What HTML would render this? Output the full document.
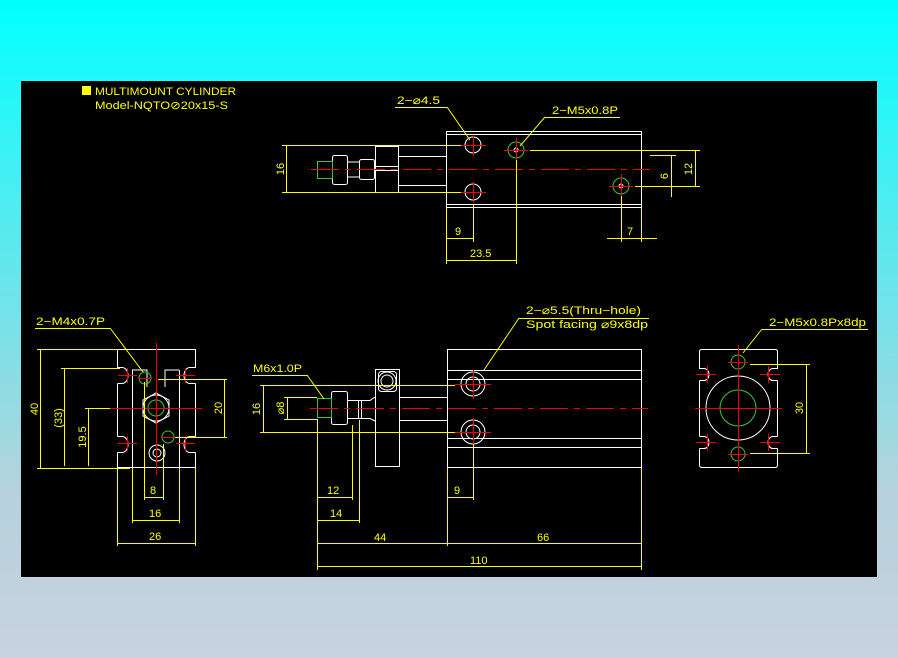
<!DOCTYPE html>
<html><head><meta charset="utf-8"><style>
html,body{margin:0;padding:0;width:898px;height:658px;overflow:hidden;background:linear-gradient(#00ffff 0%,#20f8fa 12%,#b6d2dc 75%,#c8d2e0 100%)}
svg{position:absolute;left:0;top:0}
text{font-family:"Liberation Sans",sans-serif;font-size:11px;fill:#ffff00}
</style></head><body>
<svg width="898" height="658" viewBox="0 0 898 658">
<rect x="21" y="81" width="856" height="496" fill="#000"/>
<rect x="82" y="86" width="9" height="9" fill="#ffff00"/>
<text x="95" y="95" textLength="141" lengthAdjust="spacingAndGlyphs">MULTIMOUNT  CYLINDER</text>
<text x="95" y="109" textLength="133" lengthAdjust="spacingAndGlyphs">Model-NQTO⊘20x15-S</text>

<!-- TOP VIEW -->
<g fill="none" stroke="#fff" stroke-width="1">
<rect x="446.5" y="131.5" width="195" height="76"/>
<line x1="446" y1="134.5" x2="641" y2="134.5"/><line x1="446" y1="204.5" x2="641" y2="204.5"/>
<rect x="375.5" y="146.5" width="23" height="46"/>
<line x1="399" y1="156.5" x2="446" y2="156.5"/><line x1="399" y1="185.5" x2="446" y2="185.5"/>
<line x1="375" y1="166.5" x2="399" y2="166.5"/><line x1="375" y1="170.5" x2="399" y2="170.5"/>
<rect x="332.5" y="155.5" width="15" height="29" rx="2"/>
<rect x="359.5" y="159.5" width="15" height="20" rx="2"/>
<line x1="347" y1="162" x2="360" y2="162"/><line x1="347" y1="177" x2="360" y2="177"/>
<circle cx="473" cy="145" r="8"/><circle cx="473" cy="192" r="8"/>
<circle cx="516" cy="150" r="2"/><circle cx="621" cy="186" r="2"/>
</g>
<g fill="none" stroke="#3c3" stroke-width="1">
<rect x="317.5" y="161.5" width="15" height="17"/>
<circle cx="516" cy="150" r="8"/><circle cx="621" cy="186" r="8"/>
</g>
<g stroke="#e00" stroke-width="1">
<line x1="311" y1="169.5" x2="650" y2="169.5" stroke-dasharray="28,6,6,6"/>
<line x1="461" y1="145.5" x2="486" y2="145.5"/><line x1="473.5" y1="135" x2="473.5" y2="156"/>
<line x1="461" y1="192.5" x2="486" y2="192.5"/><line x1="473.5" y1="182" x2="473.5" y2="203"/>
<line x1="504" y1="150.5" x2="528" y2="150.5"/><line x1="516.5" y1="138" x2="516.5" y2="162"/>
<line x1="609" y1="186.5" x2="633" y2="186.5"/><line x1="621.5" y1="174" x2="621.5" y2="198"/>
</g>
<g stroke="#ff0" stroke-width="1" fill="none">
<line x1="282" y1="145.5" x2="461" y2="145.5"/><line x1="282" y1="192.5" x2="461" y2="192.5"/>
<line x1="286.5" y1="146" x2="286.5" y2="192"/>
<line x1="446.5" y1="208" x2="446.5" y2="264"/><line x1="473.5" y1="204" x2="473.5" y2="242"/>
<line x1="446" y1="238.5" x2="473" y2="238.5"/>
<line x1="516.5" y1="160" x2="516.5" y2="264"/><line x1="446" y1="260.5" x2="516" y2="260.5"/>
<line x1="621.5" y1="196" x2="621.5" y2="242"/><line x1="641.5" y1="208" x2="641.5" y2="242"/>
<line x1="607" y1="238.5" x2="657" y2="238.5"/>
<line x1="530" y1="150.5" x2="700" y2="150.5"/><line x1="635" y1="186.5" x2="700" y2="186.5"/>
<line x1="650" y1="155.5" x2="676" y2="155.5"/>
<line x1="695.5" y1="151" x2="695.5" y2="186"/><line x1="671.5" y1="155" x2="671.5" y2="197"/>
<line x1="395" y1="107.5" x2="447" y2="107.5"/><polyline points="447,107 470,140"/>
<line x1="545" y1="117.5" x2="620" y2="117.5"/><polyline points="545,117 520,146"/>
</g>
<text x="397" y="104" textLength="43" lengthAdjust="spacingAndGlyphs">2−⌀4.5</text>
<text x="552" y="114" textLength="66" lengthAdjust="spacingAndGlyphs">2−M5x0.8P</text>
<text transform="translate(284,169) rotate(-90)" text-anchor="middle">16</text>
<text x="455" y="235">9</text>
<text x="470" y="257">23.5</text>
<text x="627" y="235">7</text>
<text transform="translate(668,176) rotate(-90)" text-anchor="middle">6</text>
<text transform="translate(692,169) rotate(-90)" text-anchor="middle">12</text>

<!-- LEFT VIEW -->
<g fill="none" stroke="#fff" stroke-width="1">
<path d="M117.5 349.5H195.5V367.5H190M117.5 349.5V367.5H122M117.5 383.5V436.5M195.5 383.5V436.5M117.5 452.5V467.5H195.5V452.5"/>
<path d="M122 367.5A6 8 0 0 1 122 383.5H117.5M190 367.5A6 8 0 0 0 190 383.5H195.5M117.5 436.5H122A6 8 0 0 1 122 452.5H117.5M195.5 436.5H190A6 8 0 0 0 190 452.5H195.5"/>
<line x1="132.5" y1="370" x2="132.5" y2="467"/><line x1="179.5" y1="370" x2="179.5" y2="467"/>
<path d="M132 370H147V387M179 370H165V387"/>
<polygon points="156,393 169,400 169,416 156,423 143,416 143,400"/>
<circle cx="156" cy="408" r="13"/>
<circle cx="157" cy="453" r="8"/><circle cx="157" cy="453" r="4"/>
</g>
<g fill="none" stroke="#3c3"><circle cx="156" cy="408" r="8"/><circle cx="145" cy="378" r="6"/><circle cx="168" cy="437" r="6"/></g>
<g stroke="#e00">
<line x1="156.5" y1="343" x2="156.5" y2="475"/><line x1="110" y1="408.5" x2="202" y2="408.5"/>
<line x1="138" y1="378.5" x2="152" y2="378.5"/><line x1="161" y1="437.5" x2="175" y2="437.5"/>
<line x1="118" y1="375.5" x2="137" y2="375.5"/><line x1="127.5" y1="368" x2="127.5" y2="383"/>
<line x1="176" y1="375.5" x2="195" y2="375.5"/><line x1="185.5" y1="368" x2="185.5" y2="383"/>
<line x1="118" y1="443.5" x2="137" y2="443.5"/><line x1="127.5" y1="436" x2="127.5" y2="451"/>
<line x1="176" y1="443.5" x2="195" y2="443.5"/><line x1="185.5" y1="436" x2="185.5" y2="451"/>
</g>
<g stroke="#ff0" fill="none">
<line x1="37" y1="349.5" x2="117" y2="349.5"/><line x1="37" y1="468.5" x2="130" y2="468.5"/>
<line x1="40.5" y1="349" x2="40.5" y2="468"/>
<line x1="61" y1="368.5" x2="120" y2="368.5"/><line x1="64.5" y1="369" x2="64.5" y2="466"/>
<line x1="85" y1="408.5" x2="110" y2="408.5"/><line x1="88.5" y1="408" x2="88.5" y2="466"/>
<line x1="158" y1="379.5" x2="227" y2="379.5"/><line x1="175" y1="437.5" x2="227" y2="437.5"/>
<line x1="224.5" y1="379" x2="224.5" y2="437"/>
<line x1="144.5" y1="382" x2="144.5" y2="500"/><line x1="163.5" y1="444" x2="163.5" y2="500"/>
<line x1="144" y1="497.5" x2="163" y2="497.5"/>
<line x1="132.5" y1="468" x2="132.5" y2="523"/><line x1="179.5" y1="468" x2="179.5" y2="523"/>
<line x1="132" y1="520.5" x2="179" y2="520.5"/>
<line x1="117.5" y1="468" x2="117.5" y2="546"/><line x1="195.5" y1="468" x2="195.5" y2="546"/>
<line x1="117" y1="543.5" x2="195" y2="543.5"/>
<line x1="35" y1="328.5" x2="110" y2="328.5"/><polyline points="110,328 143,372"/>
</g>
<text x="36" y="325" textLength="69" lengthAdjust="spacingAndGlyphs">2−M4x0.7P</text>
<text transform="translate(38,409) rotate(-90)" text-anchor="middle">40</text>
<text transform="translate(62,418) rotate(-90)" text-anchor="middle">(33)</text>
<text transform="translate(86,437) rotate(-90)" text-anchor="middle">19.5</text>
<text transform="translate(222,408) rotate(-90)" text-anchor="middle">20</text>
<text x="150" y="494">8</text>
<text x="149" y="517">16</text>
<text x="149" y="540">26</text>

<!-- MIDDLE VIEW -->
<g fill="none" stroke="#fff">
<rect x="447.5" y="349.5" width="194" height="118"/>
<line x1="447" y1="370.5" x2="641" y2="370.5"/><line x1="447" y1="379.5" x2="641" y2="379.5"/>
<line x1="447" y1="438.5" x2="641" y2="438.5"/><line x1="447" y1="447.5" x2="641" y2="447.5"/>
<circle cx="473" cy="384" r="12"/><circle cx="473" cy="384" r="7"/>
<circle cx="473" cy="432" r="12"/><circle cx="473" cy="432" r="7"/>
<rect x="375.5" y="369.5" width="24" height="97"/>
<rect x="378.5" y="371.5" width="18" height="20" rx="3"/>
<circle cx="387" cy="381" r="9"/><circle cx="387" cy="381" r="6"/>
<line x1="400" y1="397.5" x2="447" y2="397.5"/><line x1="400" y1="420.5" x2="447" y2="420.5"/>
<rect x="331.5" y="391.5" width="16" height="33" rx="2"/>
<path d="M347 400.5H370L375 397M347 418.5H370L375 421M358.5 400V419M361.5 400V419"/>
</g>
<g fill="none" stroke="#3c3"><rect x="317.5" y="398.5" width="14" height="19"/></g>
<g stroke="#e00">
<line x1="310" y1="408.5" x2="648" y2="408.5" stroke-dasharray="28,6,6,6"/>
<line x1="455" y1="384.5" x2="491" y2="384.5"/><line x1="473.5" y1="370" x2="473.5" y2="399"/>
<line x1="455" y1="432.5" x2="491" y2="432.5"/><line x1="473.5" y1="418" x2="473.5" y2="447"/>
</g>
<g stroke="#ff0" fill="none">
<line x1="260" y1="385.5" x2="455" y2="385.5"/><line x1="260" y1="432.5" x2="455" y2="432.5"/>
<line x1="263.5" y1="386" x2="263.5" y2="432"/>
<line x1="284" y1="397.5" x2="317" y2="397.5"/><line x1="284" y1="419.5" x2="317" y2="419.5"/>
<line x1="287.5" y1="397" x2="287.5" y2="419"/>
<line x1="317.5" y1="419" x2="317.5" y2="570"/><line x1="352.5" y1="425" x2="352.5" y2="500"/>
<line x1="359.5" y1="420" x2="359.5" y2="523"/>
<line x1="317" y1="497.5" x2="352" y2="497.5"/><line x1="317" y1="520.5" x2="359" y2="520.5"/>
<line x1="447.5" y1="468" x2="447.5" y2="546"/><line x1="473.5" y1="444" x2="473.5" y2="500"/>
<line x1="447" y1="497.5" x2="473" y2="497.5"/>
<line x1="641.5" y1="468" x2="641.5" y2="570"/>
<line x1="317" y1="543.5" x2="641" y2="543.5"/><line x1="317" y1="566.5" x2="641" y2="566.5"/>
<line x1="252" y1="375.5" x2="307" y2="375.5"/><polyline points="307,375 324,399"/>
<line x1="519" y1="318.5" x2="649" y2="318.5"/><polyline points="519,318 484,370"/>
</g>
<text x="253" y="372" textLength="49" lengthAdjust="spacingAndGlyphs">M6x1.0P</text>
<text x="526" y="314" textLength="115" lengthAdjust="spacingAndGlyphs">2−⌀5.5(Thru−hole)</text>
<text x="526" y="328" textLength="122" lengthAdjust="spacingAndGlyphs">Spot  facing  ⌀9x8dp</text>
<text transform="translate(260,409) rotate(-90)" text-anchor="middle">16</text>
<text transform="translate(284,408) rotate(-90)" text-anchor="middle">⌀8</text>
<text x="327" y="494">12</text>
<text x="330" y="517">14</text>
<text x="454" y="494">9</text>
<text x="374" y="541">44</text>
<text x="537" y="541">66</text>
<text x="470" y="564">110</text>

<!-- RIGHT VIEW -->
<g fill="none" stroke="#fff">
<path d="M699.5 351.5Q699.5 349.5 702 349.5H775Q777.5 349.5 777.5 351.5V368.5H773M699.5 351.5V368.5H704M699.5 380.5V436.5M777.5 380.5V436.5M699.5 448.5V465Q699.5 467.5 702 467.5H775Q777.5 467.5 777.5 465V448.5"/>
<path d="M704 368.5A5 6 0 0 1 704 380.5H699.5M773 368.5A5 6 0 0 0 773 380.5H777.5M699.5 436.5H704A5 6 0 0 1 704 448.5H699.5M777.5 436.5H773A5 6 0 0 0 773 448.5H777.5"/>
<circle cx="738" cy="408" r="32"/>
</g>
<g fill="none" stroke="#3c3"><circle cx="738" cy="408" r="18"/><circle cx="738" cy="362" r="7"/><circle cx="738" cy="454" r="7"/></g>
<g stroke="#e00">
<line x1="738.5" y1="345" x2="738.5" y2="472"/><line x1="695" y1="408.5" x2="782" y2="408.5"/>
<line x1="728" y1="362.5" x2="748" y2="362.5"/><line x1="728" y1="454.5" x2="748" y2="454.5"/>
<line x1="696" y1="374.5" x2="716" y2="374.5"/><line x1="707.5" y1="366" x2="707.5" y2="383"/>
<line x1="760" y1="374.5" x2="780" y2="374.5"/><line x1="768.5" y1="366" x2="768.5" y2="383"/>
<line x1="696" y1="442.5" x2="716" y2="442.5"/><line x1="707.5" y1="434" x2="707.5" y2="451"/>
<line x1="760" y1="442.5" x2="780" y2="442.5"/><line x1="768.5" y1="434" x2="768.5" y2="451"/>
</g>
<g stroke="#ff0" fill="none">
<line x1="750" y1="364.5" x2="810" y2="364.5"/><line x1="750" y1="453.5" x2="810" y2="453.5"/>
<line x1="806.5" y1="364" x2="806.5" y2="453"/>
<line x1="762" y1="329.5" x2="868" y2="329.5"/><polyline points="762,329 743,353"/>
</g>
<text x="769" y="326" textLength="97" lengthAdjust="spacingAndGlyphs">2−M5x0.8Px8dp</text>
<text transform="translate(803,408) rotate(-90)" text-anchor="middle">30</text>
</svg>
</body></html>
